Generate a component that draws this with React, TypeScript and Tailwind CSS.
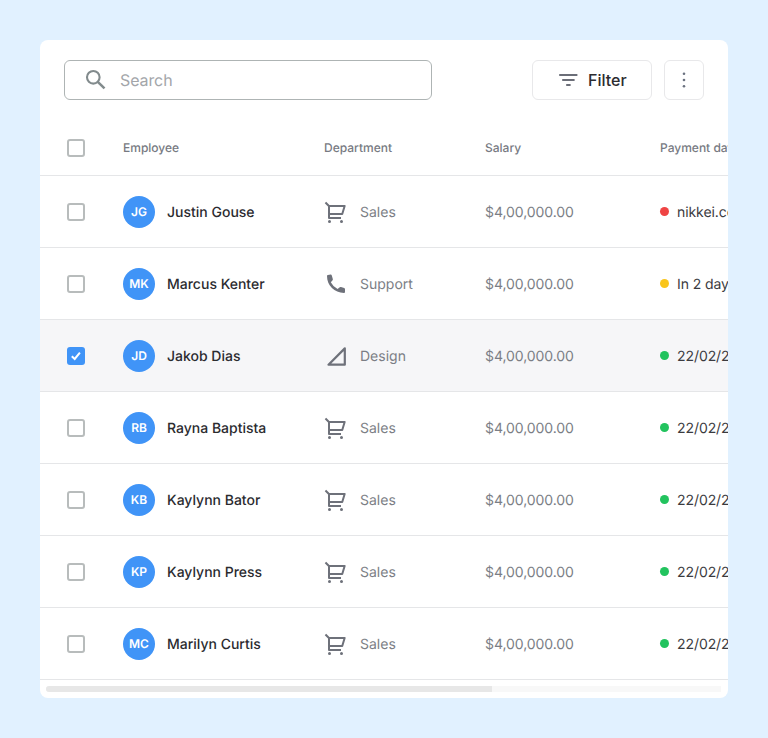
import React from 'react';

type Dept = 'Sales' | 'Support' | 'Design';
type Row = { initials: string; name: string; dept: Dept; date: string; dot: string; checked?: boolean };

const GREEN = 'bg-[#22c35e]';

const rows: Row[] = [
  { initials: 'JG', name: 'Justin Gouse', dept: 'Sales', date: 'nikkei.com', dot: 'bg-[#ef4444]' },
  { initials: 'MK', name: 'Marcus Kenter', dept: 'Support', date: 'In 2 days', dot: 'bg-[#f9c51b]' },
  { initials: 'JD', name: 'Jakob Dias', dept: 'Design', date: '22/02/2022', dot: GREEN, checked: true },
  { initials: 'RB', name: 'Rayna Baptista', dept: 'Sales', date: '22/02/2022', dot: GREEN },
  { initials: 'KB', name: 'Kaylynn Bator', dept: 'Sales', date: '22/02/2022', dot: GREEN },
  { initials: 'KP', name: 'Kaylynn Press', dept: 'Sales', date: '22/02/2022', dot: GREEN },
  { initials: 'MC', name: 'Marilyn Curtis', dept: 'Sales', date: '22/02/2022', dot: GREEN },
];

const COLS = 'grid grid-cols-[83px_201px_161px_175px_180px] w-[800px] items-center';

function Checkbox({ checked }: { checked?: boolean }) {
  return checked ? (
    <span className="ml-[27px] flex size-[18px] items-center justify-center rounded-[3px] bg-[#4094f7]">
      <svg width="18" height="18" viewBox="0 0 18 18" fill="none" stroke="white" strokeWidth="2">
        <path d="M4.8 9.2 L7.7 12 L12.9 5.6" />
      </svg>
    </span>
  ) : (
    <span className="ml-[27px] block size-[18px] rounded-[3px] border-2 border-[#b8bcbc]" />
  );
}

function DeptIcon({ dept }: { dept: Dept }) {
  if (dept === 'Sales')
    return (
      <svg width="24" height="24" viewBox="0 0 24 24" fill="currentColor">
        <path d="M4 6.414L.757 3.172l1.415-1.415L5.414 5h15.242a1 1 0 0 1 .958 1.287l-2.4 8a1 1 0 0 1-.958.713H6v2h11v2H5a1 1 0 0 1-1-1V6.414zM6 7v6h11.512l1.8-6H6zm-.5 16a1.5 1.5 0 1 1 0-3 1.5 1.5 0 0 1 0 3zm12 0a1.5 1.5 0 1 1 0-3 1.5 1.5 0 0 1 0 3z" />
      </svg>
    );
  if (dept === 'Support')
    return (
      <svg width="24" height="24" viewBox="0 0 24 24" fill="currentColor">
        <path d="M7.8 3.5L8.8 6.9Q9.1 7.8 8.4 8.5L6.8 10.2Q9 14.6 13.6 17L15.4 15.4Q16.1 14.8 17 15.1L20.2 16.1Q21 16.4 21 17.3V20Q21 21 20 21C10.5 21 3 13.6 3 4.1Q3 3.1 3.9 3L6.6 2.6Q7.5 2.5 7.8 3.5Z" />
      </svg>
    );
  return (
    <svg width="24" height="24" viewBox="0 0 24 24" fill="none" stroke="currentColor" strokeWidth="2.2" strokeLinejoin="round">
      <path d="M4.5 20.7 L20.8 4.4 V20.7 Z" />
    </svg>
  );
}

export default function App() {
  return (
    <div className="h-[738px] w-[768px] bg-[#e1f1ff] p-10 font-['Inter',sans-serif] [text-rendering:geometricPrecision]">
      <div className="flex h-[658px] w-[688px] flex-col overflow-hidden rounded-lg bg-white">
        <div className="flex h-20 shrink-0 items-center px-6">
          <div className="flex h-10 w-[368px] items-center rounded-md border border-[#aeb4b4] pl-[18px]">
            <svg width="26" height="26" viewBox="0 0 26 26" fill="none" stroke="#828b8d" strokeWidth="2.1">
              <circle cx="10.3" cy="10.3" r="6.3" />
              <path d="M14.8 14.8L21.5 21.3" strokeWidth="2.5" />
            </svg>
            <span className="ml-[11px] text-base leading-6 tracking-[-0.1px] text-[#a3a6aa]">Search</span>
          </div>
          <button className="ml-auto flex h-10 w-[120px] items-center rounded-md border border-[#e8e8ea] pl-[25px] text-base font-medium text-[#2b2b2f]">
            <svg width="20" height="20" viewBox="0 0 20 20" stroke="#6b6e78" strokeWidth="1.9">
              <path d="M1.2 5H19.4M4.2 10H16.6M8.2 15H12.6" />
            </svg>
            <span className="ml-[10px]">Filter</span>
          </button>
          <button className="ml-3 flex size-10 items-center justify-center rounded-md border border-[#e8e8ea]">
            <svg width="20" height="20" viewBox="0 0 20 20" fill="#6b7280">
              <circle cx="10" cy="3.7" r="1.3" />
              <circle cx="10" cy="10" r="1.3" />
              <circle cx="10" cy="16.3" r="1.3" />
            </svg>
          </button>
        </div>

        <div className={`${COLS} h-14 shrink-0 border-b border-[#e5e6e8] text-xs font-medium text-[#777a82]`}>
          <Checkbox />
          <span>Employee</span>
          <span>Department</span>
          <span>Salary</span>
          <span>Payment date</span>
        </div>

        {rows.map((r) => (
          <div key={r.name} className={`${COLS} h-[72px] shrink-0 border-b border-[#e5e6e8] text-sm ${r.checked ? 'bg-[#f6f6f8]' : ''}`}>
            <Checkbox checked={r.checked} />
            <div className="flex items-center gap-3">
              <span className="flex size-8 items-center justify-center rounded-full bg-[#4094f7] text-xs font-semibold text-white">{r.initials}</span>
              <span className="pt-0.5 font-medium text-[#2b2b2f]">{r.name}</span>
            </div>
            <div className="flex items-center gap-3 text-[#6e717a]">
              <DeptIcon dept={r.dept} />
              <span className="pt-0.5 text-[#7b7e85]">{r.dept}</span>
            </div>
            <span className="pt-0.5 tracking-[-0.08px] text-[#7b7e85]">$4,00,000.00</span>
            <div className="flex items-center gap-2 text-[#3b3b40]">
              <span className={`size-[9px] rounded-full ${r.dot}`} />
              <span className="pt-0.5 tracking-[-0.08px]">{r.date}</span>
            </div>
          </div>
        ))}

        <div className="mr-[7px] ml-1.5 mt-1.5 h-1.5 shrink-0 rounded-l-[3px] bg-[#f8f8f8]">
          <div className="h-full w-[446px] rounded-l-[3px] bg-[#e7e7e7]" />
        </div>
      </div>
    </div>
  );
}
